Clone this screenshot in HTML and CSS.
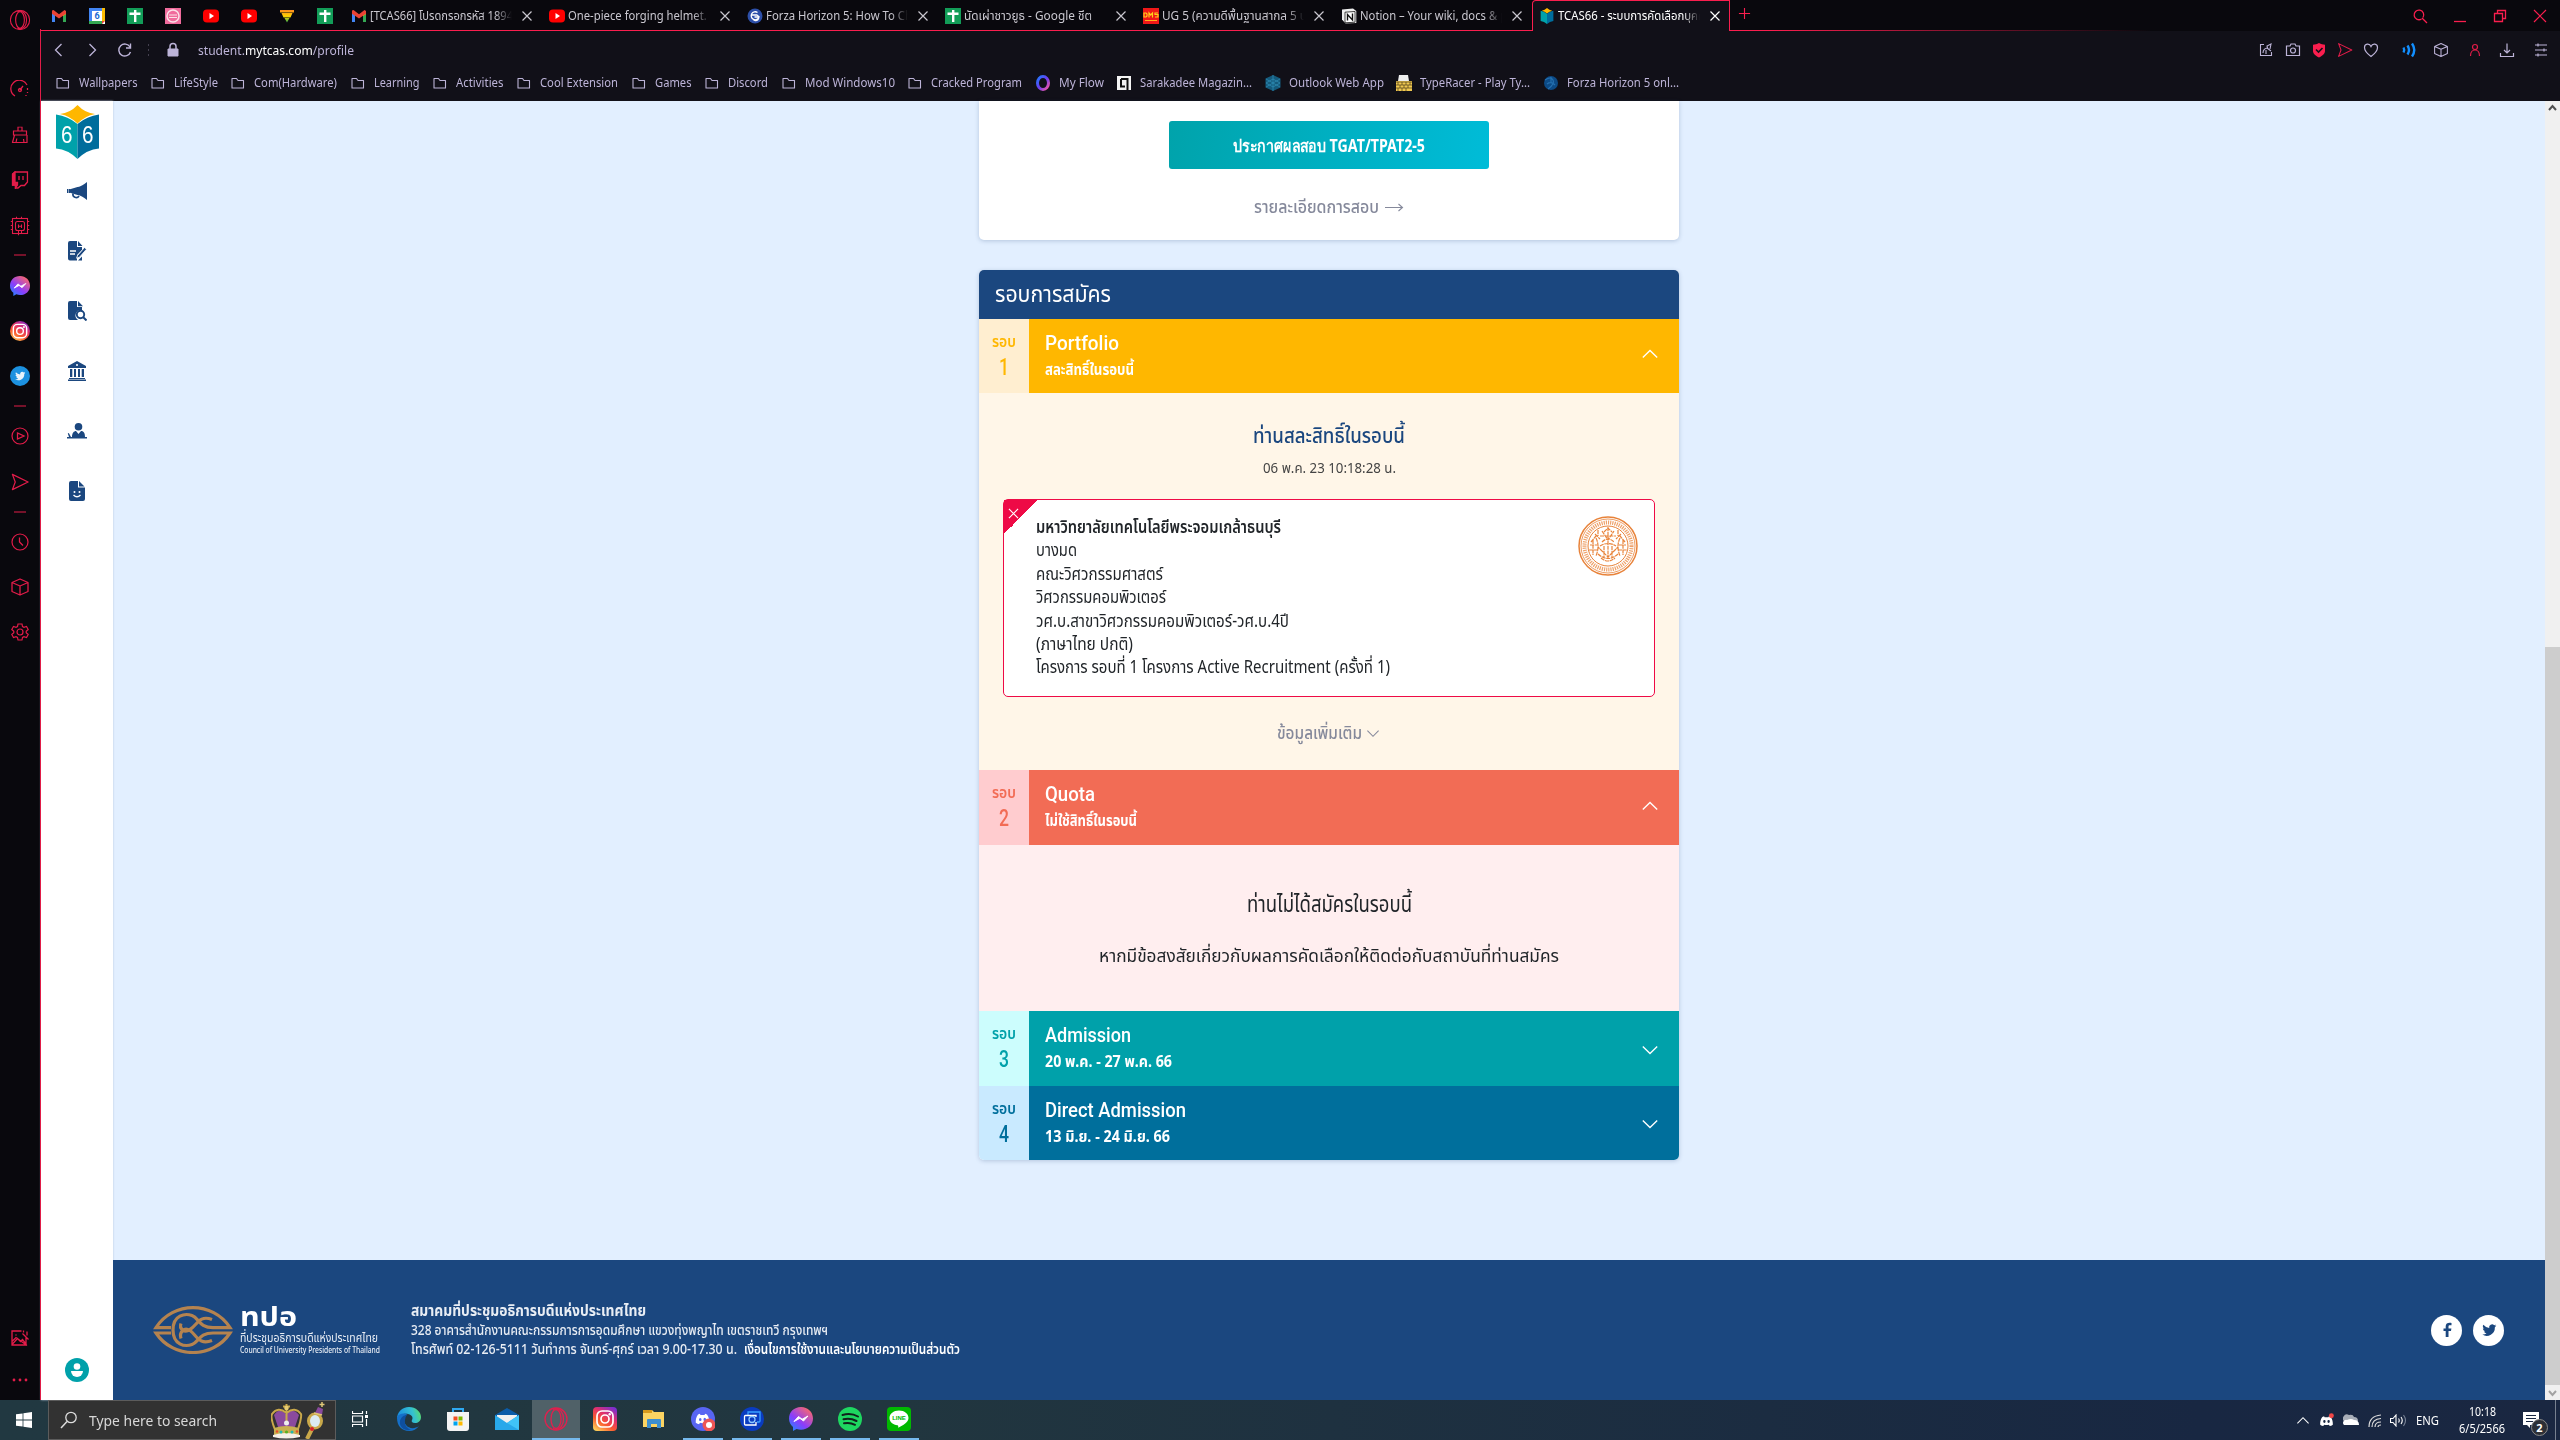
FILE: index.html
```html
<!DOCTYPE html>
<html lang="th">
<head>
<meta charset="utf-8">
<title>TCAS66</title>
<link rel="stylesheet" href="styles.css">
</head>
<body>
<svg class="defs" width="0" height="0" aria-hidden="true">
  <defs>
    <linearGradient id="gFlow" x1="0" y1="0" x2="1" y2="1"><stop offset="0" stop-color="#1f7bff"/><stop offset=".5" stop-color="#6a3cf0"/><stop offset="1" stop-color="#ff5aa0"/></linearGradient>
    <linearGradient id="gMsg" x1="0" y1="1" x2=".8" y2="0"><stop offset="0" stop-color="#1292ff"/><stop offset=".45" stop-color="#8a3dfc"/><stop offset="1" stop-color="#ff6a68"/></linearGradient>
    <linearGradient id="gIg" x1=".15" y1="1" x2=".8" y2="0"><stop offset="0" stop-color="#ffd35a"/><stop offset=".35" stop-color="#f9592f"/><stop offset=".65" stop-color="#e1306c"/><stop offset="1" stop-color="#7b2fd0"/></linearGradient>
    <linearGradient id="gEdge" x1="0" y1=".2" x2="1" y2="0"><stop offset="0" stop-color="#1a8fe0"/><stop offset=".6" stop-color="#35c1d0"/><stop offset="1" stop-color="#5fe05a"/></linearGradient>
    <linearGradient id="gTri" x1="0" y1="0" x2="0" y2="1"><stop offset="0" stop-color="#ff8a1f"/><stop offset=".5" stop-color="#ffd400"/><stop offset="1" stop-color="#2fa84f"/></linearGradient>
  </defs>
  <symbol id="gmail" viewBox="0 0 16 16"><path d="M1 3v11h3V7z" fill="#4285f4"/><path d="M15 3v11h-3V7z" fill="#34a853"/><path d="M12 5v3l3-2V3.500z" fill="#fbbc04"/><path d="M1 2.500 2.500 2 8 6.200 13.500 2l1.500 1v2.700L8 10.500 1 5.700z" fill="#ea4335"/></symbol>
  <symbol id="sheet" viewBox="0 0 16 16"><path d="M0 0h16v16H0z" fill="#129d58"/><path d="M7 2h2.400v12H7zM2.500 4.500h11V7h-11z" fill="#fff"/></symbol>
  <symbol id="yt" viewBox="0 0 16 16"><rect y="1.500" width="16" height="13" rx="4" fill="#f00"/><path d="m6.500 5 4.500 3-4.500 3z" fill="#fff"/></symbol>
  <symbol id="pinkfav" viewBox="0 0 16 16"><path d="M0 0h16v16H0z" fill="#f06b9c"/><circle cx="8" cy="8" r="6" fill="none" stroke="#fbe2e8" stroke-width="1.500"/><path d="M4 7h8M4 9.500h8" stroke="#fbe2e8"/></symbol>
  <symbol id="tri" viewBox="0 0 16 16"><path d="M1 2h14v2.500H1zM2.500 5h11l-2 4.500h-7zM5.500 10h5L8 14.500z" fill="url(#gTri)"/></symbol>
  <symbol id="gfg" viewBox="0 0 16 16"><circle cx="8" cy="8" r="7.500" fill="#2d4fa8"/><path d="M10.500 4.500A4 4 0 1 0 12 9H7.500M4 7h6a3 3 0 1 1-4 4" fill="none" stroke="#fff" stroke-width="1.300"/></symbol>
  <symbol id="ug" viewBox="0 0 16 16"><path d="M0 0h16v16H0z" fill="#f01818"/><path d="M1 5h2l1 1v2L3 9H1zM6 9.500V5l1.700 2L9.500 5v4.500M15 5h-3v1.500h3V9h-3" fill="none" stroke="#ffd21a" stroke-width="1.200"/><path d="M2 12.500h12" stroke="#ffb01a"/></symbol>
  <symbol id="notion" viewBox="0 0 16 16"><path d="M1 1.500 12 .6l3.300 2.400v12L4.500 15.500 1 11.500z" fill="#eee"/><path d="M4 4.200 14 3.500v10.700l-10 .6z" fill="#fff" stroke="#111" stroke-width=".8"/><path d="M6.500 12.500v-6l5 5.500V5.500" fill="none" stroke="#111" stroke-width="1.400"/></symbol>
  <symbol id="book" viewBox="0 0 43 54"><path d="M0 9.500Q12 11 21.500 19v35Q12 44.500 0 43.500z" fill="#00a1aa"/><path d="M43 9.500Q31 11 21.500 19v35Q31 44.500 43 43.500z" fill="#006d9c"/><path d="M4 9Q14 8 21.500 0 29 8 39 9 29 11 21.500 18.500 14 11 4 9z" fill="#ffb700"/></symbol>
  <symbol id="x" viewBox="0 0 16 16"><path d="m3.500 3.500 9 9M12.500 3.500l-9 9" fill="none" stroke="currentColor" stroke-width="1.200"/></symbol>
  <symbol id="folder" viewBox="0 0 16 16"><path d="M2 3.500h4.500l1.500 2h5.500v7.500H2z" fill="none" stroke="currentColor" stroke-width="1.100" stroke-linejoin="round"/></symbol>
  <symbol id="opera" viewBox="0 0 24 24"><g fill="none" stroke="currentColor" stroke-width="1.300"><circle cx="12" cy="12" r="11"/><ellipse cx="12" cy="12" rx="5" ry="9.500"/><path d="M9 2.500C17 0 19.500 7 19.500 12S17 24 9 21.500"/></g></symbol>
  <symbol id="cube" viewBox="0 0 20 20"><path d="m10 2 8 3.500v9L10 18l-8-3.500v-9zM2 5.500 10 9l8-3.500M10 9v9" fill="none" stroke="currentColor" stroke-width="1.300" stroke-linejoin="round"/></symbol>
  <symbol id="send" viewBox="0 0 20 20"><path d="m2 2 16.500 8L2 18l3-8z" fill="none" stroke="currentColor" stroke-width="1.300" stroke-linejoin="round"/></symbol>
  <symbol id="msg" viewBox="0 0 24 24"><path d="M12 0C5 0 0 5 0 11.600c0 3.600 1.500 6.400 4 8.400V24l3.600-2A13 13 0 0 0 12 22.800c7 0 12-4.800 12-11.200S19 0 12 0z" fill="url(#gMsg)"/><path d="m5 14.500 4.500-5 3.600 2.700L19 9l-4.500 5-3.600-2.700z" fill="#fff" stroke="#fff" stroke-linejoin="round"/></symbol>
  <symbol id="igmark" viewBox="0 0 24 24"><g fill="none" stroke="#fff" stroke-width="1.700"><rect x="4" y="4" width="16" height="16" rx="5"/><circle cx="12" cy="12" r="4"/></g><circle cx="16.700" cy="7.300" r="1.200" fill="#fff"/></symbol>
  <symbol id="bird" viewBox="0 0 24 24"><path d="M23 5.500a8 8 0 0 1-2.400.7 4.200 4.200 0 0 0 1.900-2.400 9 9 0 0 1-2.700 1.100 4.400 4.400 0 0 0-7.500 4A12.300 12.300 0 0 1 3.500 4.300a4.400 4.400 0 0 0 1.300 5.800 4 4 0 0 1-2-.6c0 2.200 1.500 4 3.500 4.400a4.500 4.500 0 0 1-2 .1 4.300 4.300 0 0 0 4 3A8.800 8.800 0 0 1 2 18.800a12.300 12.300 0 0 0 18.800-11z" fill="currentColor"/></symbol>
  <symbol id="up" viewBox="0 0 20 12"><path d="m2 10 8-8 8 8" fill="none" stroke="currentColor" stroke-width="1.500"/></symbol>
  <symbol id="down" viewBox="0 0 20 12"><path d="m2 2 8 8 8-8" fill="none" stroke="currentColor" stroke-width="1.500"/></symbol>
  <symbol id="discord" viewBox="0 0 20 16"><path fill-rule="evenodd" d="M6.500 1 4 2C1.500 5.500.8 9 1 13c1.500 1.300 3 2 4.500 2l1-2q3.500 1 7 0l1 2c1.500 0 3-.7 4.500-2 .2-4-.5-7.500-3-11l-2.500-1-.8 1.500H7.300zM5.300 8.500a1.700 2 0 1 0 3.400 0 1.700 2 0 1 0-3.400 0zM11.300 8.500a1.700 2 0 1 0 3.400 0 1.700 2 0 1 0-3.400 0z" fill="#fff"/></symbol>
</svg>

<div class="browser">
  <aside class="gx">
    <svg style="--y:20" width="21" height="21"><use href="#opera"/></svg>
    <svg style="--y:89" width="20" height="18" viewBox="0 0 20 18"><path d="M5 16A8.500 8.500 0 1 1 17 5M10 10l3-4M17.500 8v2M17.500 12v1M16 15v1M8.500 10a1.500 1.500 0 1 0 3 0 1.500 1.500 0 0 0-3 0" fill="none" stroke="currentColor" stroke-width="1.300"/></svg>
    <svg style="--y:135" width="17" height="17" viewBox="0 0 17 17"><path d="M6.500 4.500v-4h4v4M2 8.500v-4h13v4zM3 8.500 1 16h14.500V8.500M4.500 16l.8-4M12 12.500l.5 3.500" fill="none" stroke="currentColor" stroke-width="1.200"/></svg>
    <svg style="--y:180" width="17" height="18" viewBox="0 0 17 18"><path d="M1 3.500 3.500 1H16v10l-3 3.500H9.500L6.500 17H4v-3H1z" fill="none" stroke="currentColor" stroke-width="1.400"/><path d="M1 3 3.500 1v10.500H6V14L4 17v-3H1zM7.500 5v4M11.500 5v4" fill="currentColor" stroke="currentColor" stroke-width="1.300"/></svg>
    <svg style="--y:226" width="19" height="19" viewBox="0 0 19 19"><g fill="none" stroke="currentColor" stroke-width="1.100"><rect x="2" y="2" width="15" height="15"/><rect x="5" y="5" width="9" height="9" rx="2"/><path d="M0 5h2M0 9h2M0 13h2M17 5h2M17 9h2M17 13h2M6 0v2M11 0v2M8 14v5M11 14v3M8 8v3.500M11 8v3.500M8 9.700h3"/></g></svg>
    <i class="dash" style="--y:255"></i>
    <svg style="--y:286" width="20" height="20"><use href="#msg"/></svg>
    <svg style="--y:331" width="20" height="20" viewBox="0 0 24 24"><circle cx="12" cy="12" r="12" fill="url(#gIg)"/><use href="#igmark"/></svg>
    <svg style="--y:376" width="20" height="20" viewBox="0 0 24 24"><circle cx="12" cy="12" r="12" fill="#1c91e0"/><svg x="5" y="5" width="14" height="14" color="#e8f3fb"><use href="#bird"/></svg></svg>
    <i class="dash" style="--y:406"></i>
    <svg style="--y:436" width="18" height="18" viewBox="0 0 18 18"><path d="M6.500 6v6L13 9z" fill="none" stroke="currentColor" stroke-width="1.300"/><circle cx="9" cy="9" r="8" fill="none" stroke="currentColor" stroke-width="1.200"/></svg>
    <svg style="--y:482" width="19" height="19"><use href="#send"/></svg>
    <i class="dash" style="--y:512"></i>
    <svg style="--y:542" width="18" height="18" viewBox="0 0 18 18"><path d="M8.500 4.500V9l3.500 3.500" fill="none" stroke="currentColor" stroke-width="1.300"/><circle cx="9" cy="9" r="8" fill="none" stroke="currentColor" stroke-width="1.200"/></svg>
    <svg style="--y:587" width="20" height="20"><use href="#cube"/></svg>
    <svg style="--y:632" width="18" height="18" viewBox="0 0 18 18"><path d="M7 1h4l.5 2.500 1.500.8 2.500-.8 1.700 3-2 1.700v1.600l2 1.700-1.700 3-2.500-.8-1.500.8L11 17H7l-.5-2.500-1.500-.8-2.500.8-1.700-3 2-1.700V8.200l-2-1.700 1.700-3 2.500.8 1.500-.8z" fill="none" stroke="currentColor" stroke-width="1.200"/><circle cx="9" cy="9" r="3" fill="none" stroke="currentColor" stroke-width="1.200"/></svg>
    <svg style="--y:1338" width="19" height="17" viewBox="0 0 19 17"><path d="M11 1.500H1.500v14h14V8M1.500 15 7 9l3 3 2-2 4 5M5 5.500h1M12 4l6 6M13 1v2M16.500 2v4M1.500 12l4-4 11 8" fill="none" stroke="currentColor" stroke-width="1.300"/></svg>
    <svg style="--y:1380" width="16" height="4" viewBox="0 0 16 4" fill="currentColor"><circle cx="2" cy="2" r="1.400"/><circle cx="8" cy="2" r="1.400"/><circle cx="14" cy="2" r="1.400"/></svg>
  </aside>

  <div class="window">
    <header class="chrome">
      <div class="tabs">
        <div class="pins">
          <svg><use href="#gmail"/></svg>
          <svg viewBox="0 0 16 16"><path d="M0 0h16v16H0z" fill="#fff"/><path d="M0 0h13v3H3v10H0z" fill="#4285f4"/><path d="M13 0h3v13h-3z" fill="#fbbc04"/><path d="M3 13h10v3H0v-3z" fill="#34a853"/><path d="M13 13h3l-3 3z" fill="#ea4335"/><text x="8" y="11" font-size="9" font-weight="700" text-anchor="middle" fill="#1967d2" font-family="Roboto">6</text></svg>
          <svg><use href="#sheet"/></svg><svg><use href="#pinkfav"/></svg><svg><use href="#yt"/></svg><svg><use href="#yt"/></svg><svg><use href="#tri"/></svg><svg><use href="#sheet"/></svg>
        </div>
        <div class="tab"><svg><use href="#gmail"/></svg><span class="label"><span class="fit" data-w="143">[TCAS66] โปรดกรอกรหัส 1894</span></span><svg class="close"><use href="#x"/></svg></div>
        <div class="tab"><svg><use href="#yt"/></svg><span class="label"><span class="fit" data-w="150">One-piece forging helmet. H</span></span><svg class="close"><use href="#x"/></svg></div>
        <div class="tab"><svg><use href="#gfg"/></svg><span class="label"><span class="fit" data-w="146">Forza Horizon 5: How To Ch</span></span><svg class="close"><use href="#x"/></svg></div>
        <div class="tab"><svg><use href="#sheet"/></svg><span class="label"><span class="fit" data-w="128">นัดเผ่าชาวยูธ - Google ชีต</span></span><svg class="close"><use href="#x"/></svg></div>
        <div class="tab"><svg><use href="#ug"/></svg><span class="label"><span class="fit" data-w="145">UG 5 (ความดีพื้นฐานสากล 5 ป</span></span><svg class="close"><use href="#x"/></svg></div>
        <div class="tab"><svg><use href="#notion"/></svg><span class="label"><span class="fit" data-w="147">Notion – Your wiki, docs &amp; p</span></span><svg class="close"><use href="#x"/></svg></div>
        <div class="tab active"><svg><use href="#book"/></svg><span class="label"><span class="fit" data-w="147">TCAS66 - ระบบการคัดเลือกบุคค</span></span><svg class="close"><use href="#x"/></svg></div>
        <svg class="plus" viewBox="0 0 14 14"><path d="M7 1v12M1 7h12" stroke="currentColor" stroke-width="1.200"/></svg>
        <div class="wincontrols">
          <svg viewBox="0 0 16 16"><path d="M11 9.500a4.800 4.800 0 1 0-1.500 1.500M10 10l5 5" fill="none" stroke="currentColor" stroke-width="1.300"/></svg>
          <svg viewBox="0 0 16 16"><path d="M2 13.500h12" stroke="currentColor" stroke-width="1.300"/></svg>
          <svg viewBox="0 0 16 16"><path d="M2.500 5.500h8v8h-8zM5.500 5.500v-3h8v8h-3" fill="none" stroke="currentColor" stroke-width="1.300"/></svg>
          <svg viewBox="0 0 16 16"><path d="m2 2 12 12M14 2 2 14" stroke="currentColor" stroke-width="1.200"/></svg>
        </div>
      </div>
      <div class="address">
        <svg class="nav" viewBox="0 0 16 16"><path d="m10.500 2-6 6 6 6" fill="none" stroke="currentColor" stroke-width="1.300"/></svg>
        <svg class="nav" viewBox="0 0 16 16"><path d="m5.500 2 6 6-6 6" fill="none" stroke="currentColor" stroke-width="1.300"/></svg>
        <svg class="nav" viewBox="0 0 16 16"><path d="M13.500 10A6 6 0 1 1 13 5M13.500 1.500V6H9" fill="none" stroke="currentColor" stroke-width="1.400"/></svg>
        <i class="dots"></i>
        <svg class="lock" viewBox="0 0 14 16"><path d="M2 7h10v7H2z" fill="#bdb4d8" stroke="#bdb4d8"/><path d="M4 7V4.500a3 3 0 0 1 6 0V7" fill="none" stroke="#bdb4d8" stroke-width="1.500"/></svg>
        <span class="url"><span class="fit" data-w="156">student.<b>mytcas.com</b>/profile</span></span>
        <div class="tools">
          <svg viewBox="0 0 16 16"><path d="M6 2.500H2.500v11h11V10M5 11c0-3 2-5 4.500-5L9 4l4-2-1 5M9 6l4 3M8 8v4" fill="none" stroke="currentColor" stroke-width="1.100"/></svg>
          <svg viewBox="0 0 16 16"><path d="M1.500 4H5l1-2h4l1 2h3.500v9.500h-13z" fill="none" stroke="currentColor" stroke-width="1.200"/><circle cx="8" cy="8.500" r="2.500" fill="none" stroke="currentColor" stroke-width="1.200"/></svg>
          <svg viewBox="0 0 16 16"><path d="M8 1c2 1.300 4 1.700 6 1.700V9c0 3-3 5-6 6.500C5 14 2 12 2 9V2.700C4 2.700 6 2.300 8 1z" fill="#fa1e4e"/><path d="m5 7.500 2.500 2.500L11.500 6" fill="none" stroke="#111018" stroke-width="1.600"/></svg>
          <svg class="red"><use href="#send"/></svg>
          <svg viewBox="0 0 16 16"><path d="M8 14.500C4 11.500 1.500 9 1.500 5.500c0-4 5-4.500 6.500-1 1.500-3.500 6.500-3 6.500 1C14.500 9 12 11.500 8 14.500z" fill="none" stroke="currentColor" stroke-width="1.200"/></svg>
          <svg viewBox="0 0 16 16"><path d="M1.500 5.500q1.500 2.500 0 5M5.500 3.500q3 4.500 0 9M10 1.500q4.500 6.500 0 13" fill="none" stroke="#128fff" stroke-width="2.400"/></svg>
          <svg><use href="#cube"/></svg>
          <svg class="red" viewBox="0 0 16 16"><circle cx="8" cy="5" r="2.500" fill="none" stroke="currentColor" stroke-width="1.200"/><path d="M3.500 14c0-8 9-8 9 0" fill="none" stroke="currentColor" stroke-width="1.200"/></svg>
          <svg viewBox="0 0 16 16"><path d="M8 1.500V11M5 8l3 3 3-3M1.500 11v3.500h13V11" fill="none" stroke="currentColor" stroke-width="1.200"/></svg>
          <svg viewBox="0 0 16 16"><path d="M2 3h12M2 8h12M2 13h12M5 1.500v3M11 6.500v3M5 11.500v3" stroke="currentColor" stroke-width="1.200"/></svg>
        </div>
      </div>
      <nav class="bookmarks">
        <a><svg><use href="#folder"/></svg><span class="fit" data-w="58.500">Wallpapers</span></a>
        <a><svg><use href="#folder"/></svg><span class="fit" data-w="44">LifeStyle</span></a>
        <a><svg><use href="#folder"/></svg><span class="fit" data-w="83">Com(Hardware)</span></a>
        <a><svg><use href="#folder"/></svg><span class="fit" data-w="45.500">Learning</span></a>
        <a><svg><use href="#folder"/></svg><span class="fit" data-w="47.500">Activities</span></a>
        <a><svg><use href="#folder"/></svg><span class="fit" data-w="78">Cool Extension</span></a>
        <a><svg><use href="#folder"/></svg><span class="fit" data-w="36.500">Games</span></a>
        <a><svg><use href="#folder"/></svg><span class="fit" data-w="40">Discord</span></a>
        <a><svg><use href="#folder"/></svg><span class="fit" data-w="90">Mod Windows10</span></a>
        <a><svg><use href="#folder"/></svg><span class="fit" data-w="91">Cracked Program</span></a>
        <a><svg viewBox="0 0 16 16"><ellipse cx="8" cy="8" rx="5.500" ry="6.500" fill="none" stroke="url(#gFlow)" stroke-width="3"/></svg><span class="fit" data-w="45">My Flow</span></a>
        <a><svg viewBox="0 0 16 16"><path d="M1 1h14v14H1z" fill="#f4f4f4"/><path d="M5 4h6.500v11M5 4v7.500h4" fill="none" stroke="#111" stroke-width="2"/></svg><span class="fit" data-w="112">Sarakadee Magazin...</span></a>
        <a><svg viewBox="0 0 16 16"><path d="m8 0 7.500 3.500v9L8 16 .5 12.500v-9z" fill="#155a7c"/><path d="m1 4 14 8M15 4 1 12M8 0v16M1 8l7-4 7 4-7 4z" fill="none" stroke="#2f8fb8" stroke-width=".7"/></svg><span class="fit" data-w="95">Outlook Web App</span></a>
        <a><svg viewBox="0 0 16 16"><path d="M3 0h9l1 6H2z" fill="#eee"/><path d="M0 6h16v10H0z" fill="#f0c850"/><path d="M0 7h16M0 10h16M0 13h16M2 7v3M6 7v3M10 7v3M14 7v3M4 10v3M8 10v3M12 10v3M2 13v3M6 13v3M10 13v3" stroke="#5a4a20" stroke-width=".8"/></svg><span class="fit" data-w="110">TypeRacer - Play Ty...</span></a>
        <a><svg viewBox="0 0 16 16"><circle cx="8" cy="8" r="7" fill="#0c4a86"/><path d="M2 5q6-4 8 0T5 14M4 9q4-3 8 1M8 2v6" fill="none" stroke="#2470b0" stroke-width="1.200"/></svg><span class="fit" data-w="112">Forza Horizon 5 onl...</span></a>
      </nav>
    </header>

    <div class="viewport">
      <nav class="menu">
        <div class="logo"><svg viewBox="0 0 43 54"><use href="#book"/></svg><span>6</span><span>6</span></div>
        <svg viewBox="0 0 20 18"><path d="M20 0v18c-3-2.500-6-4.500-10-5.200V5.200C14 4.500 17 2.500 20 0zM10.500 5v8L3 10.700V7.300zM0 7h1v4H0zM1.500 7H3v4H1.500z"/><path d="M6 11.500a3.300 3.300 0 0 0 6 2.500" fill="none" stroke="currentColor" stroke-width="1.700"/></svg>
        <svg viewBox="0 0 20 20"><path d="M1 2Q1 0 3 0h7v6h5v3l-5 5v5.500H3q-2 0-2-2zM11 0l4.500 5H11z"/><path d="M3 10h6M3 13h5" stroke="#fff" stroke-width="1.300"/><path d="m10.500 14.500 7-8 2 1.700-7 8-3 1z" stroke="#fff" stroke-width=".8"/><path d="M10 19.500h5v-4l-4 4z"/></svg>
        <svg viewBox="0 0 20 20"><path d="M1 2Q1 0 3 0h7v6h5v3a5.500 5.500 0 0 0-4 10H3q-2 0-2-2zM11 0l5 5.200H11z"/><circle cx="13.500" cy="13.500" r="3.700" fill="#fff" stroke="currentColor" stroke-width="1.900"/><path d="m16 16 3.500 3.500" stroke="currentColor" stroke-width="2"/></svg>
        <svg viewBox="0 0 20 20"><path d="M10 0 19 5v2H1V5zM2 17h16v1H2zM1 18.500h18V20H1zM3 8h2.300v8H3zM7 8h2v8H7zM11 8h2v8h-2zM14.700 8H17v8h-2.300z"/><circle cx="10" cy="4" r="1" fill="#fff"/></svg>
        <svg viewBox="0 0 20 16"><circle cx="11.500" cy="3.800" r="3.800"/><path d="M5 14c0-4 2-6 4-6l2.500 3L14 8c3 0 4 2.500 4 6h2v1.500H0V14h2L.8 10.500l1-.5L4 14z"/></svg>
        <svg viewBox="0 0 20 20"><path d="M2 2q0-2 2-2h7v6.500h7V18q0 2-2 2H4q-2 0-2-2zM12 0l5.500 5.500H12z"/><circle cx="7.500" cy="11" r="1" fill="#fff"/><circle cx="12.500" cy="11" r="1" fill="#fff"/><path d="M6.500 14q3.500 3.500 7 0" fill="none" stroke="#fff" stroke-width="1.400"/></svg>
        <svg class="me" viewBox="0 0 24 24"><circle cx="12" cy="12" r="12" fill="#00a1aa"/><circle cx="12" cy="8.500" r="3.300" fill="#fff"/><path d="M6 13h12a6 6 0 0 1-12 0z" fill="#fff"/></svg>
      </nav>

      <div class="page">
        <main>
          <section class="card exam">
            <button><span class="fit" data-w="192">ประกาศผลสอบ TGAT/TPAT2-5</span></button>
            <a class="link"><span class="fit" data-w="125">รายละเอียดการสอบ</span><svg width="19" height="9" viewBox="0 0 19 9"><path d="M0 4.500h17.500M13.500 1l4 3.500-4 3.500" fill="none" stroke="currentColor" stroke-width="1.100"/></svg></a>
          </section>

          <section class="card rounds">
            <h2><span class="fit" data-w="116">รอบการสมัคร</span></h2>

            <div class="round r1">
              <div class="no"><span class="fit" data-w="24">รอบ</span><b><span class="fit" data-w="10">1</span></b></div>
              <div class="bar"><div><h3><span class="fit" data-w="74">Portfolio</span></h3><p><span class="fit" data-w="89">สละสิทธิ์ในรอบนี้</span></p></div><svg><use href="#up"/></svg></div>
            </div>
            <div class="panel p1">
              <h4><span class="fit" data-w="152">ท่านสละสิทธิ์ในรอบนี้</span></h4>
              <time><span class="fit" data-w="133">06 พ.ค. 23 10:18:28 น.</span></time>
              <article>
                <div class="corner"><svg viewBox="0 0 12 12"><path d="m1 1 10 10M11 1 1 11" stroke="#fff" stroke-width="1.200"/></svg></div>
                <ul>
                  <li class="strong"><span class="fit" data-w="245">มหาวิทยาลัยเทคโนโลยีพระจอมเกล้าธนบุรี</span></li>
                  <li><span class="fit" data-w="41">บางมด</span></li>
                  <li><span class="fit" data-w="127">คณะวิศวกรรมศาสตร์</span></li>
                  <li><span class="fit" data-w="130">วิศวกรรมคอมพิวเตอร์</span></li>
                  <li><span class="fit" data-w="253">วศ.บ.สาขาวิศวกรรมคอมพิวเตอร์-วศ.บ.4ปี</span></li>
                  <li><span class="fit" data-w="97">(ภาษาไทย ปกติ)</span></li>
                  <li><span class="fit" data-w="354">โครงการ รอบที่ 1 โครงการ Active Recruitment (ครั้งที่ 1)</span></li>
                </ul>
                <svg class="seal" viewBox="0 0 60 60" fill="none" stroke="#e8833a"><circle cx="30" cy="30" r="29" stroke-width="1.500"/><circle cx="30" cy="30" r="27" stroke-width=".8"/><circle cx="30" cy="30" r="23.500" stroke-width="4" stroke-dasharray="1.200 1" opacity=".75"/><circle cx="30" cy="30" r="20" stroke-width="1"/><path d="M30 11v32M26 16l4-4 4 4M22 20h16M24 15l6 9 6-9M20 14v6M40 14v6M24 26q6-6 12 0M22 30q8-5 16 0M15 24v15M45 24v15M12 29h7M41 29h7M11 34h9M40 34h9M22 33l8 8 8-8M20 38q10 9 20 0M23 42q7 6 14 0M18 22q4 8 0 18M42 22q-4 8 0 18M26 30v12M34 30v12M17 18l5 5M43 18l-5 5M13 26l5-6M47 26l-5-6M25 36l-5-5M35 36l5-5" stroke-width="1.200" stroke-dasharray="4 .7"/></svg>
              </article>
              <a class="link"><span class="fit" data-w="85">ข้อมูลเพิ่มเติม</span><svg width="14" height="9"><use href="#down"/></svg></a>
            </div>

            <div class="round r2">
              <div class="no"><span class="fit" data-w="24">รอบ</span><b><span class="fit" data-w="10">2</span></b></div>
              <div class="bar"><div><h3><span class="fit" data-w="50">Quota</span></h3><p><span class="fit" data-w="92">ไม่ใช้สิทธิ์ในรอบนี้</span></p></div><svg><use href="#up"/></svg></div>
            </div>
            <div class="panel p2">
              <h4><span class="fit" data-w="165">ท่านไม่ได้สมัครในรอบนี้</span></h4>
              <p><span class="fit" data-w="460">หากมีข้อสงสัยเกี่ยวกับผลการคัดเลือกให้ติดต่อกับสถาบันที่ท่านสมัคร</span></p>
            </div>

            <div class="round r3">
              <div class="no"><span class="fit" data-w="24">รอบ</span><b><span class="fit" data-w="10">3</span></b></div>
              <div class="bar"><div><h3><span class="fit" data-w="86">Admission</span></h3><p><span class="fit" data-w="127">20 พ.ค. - 27 พ.ค. 66</span></p></div><svg><use href="#down"/></svg></div>
            </div>
            <div class="round r4">
              <div class="no"><span class="fit" data-w="24">รอบ</span><b><span class="fit" data-w="10">4</span></b></div>
              <div class="bar"><div><h3><span class="fit" data-w="141">Direct Admission</span></h3><p><span class="fit" data-w="125">13 มิ.ย. - 24 มิ.ย. 66</span></p></div><svg><use href="#down"/></svg></div>
            </div>
          </section>
        </main>

        <footer>
          <svg class="knot" viewBox="0 0 80 48" fill="none" stroke="#b5834f" stroke-width="3.200"><path d="M18 21.600H3C20-5 60-5 77 21.600H60C46 21.600 46 12 39 9.500 32 7 20 9 20 24s12 17 19 14.500C46 36 46 27 60 27h17C60 53 20 53 3 27h15"/><path d="M59 13.500c-13-5-15 6-22 10-6 4-11-1-9-6M59 34.500c-13 5-15-5-22-10-6-4-11 2-9 8"/></svg>
          <div class="org"><strong><span class="fit" data-w="57">ทปอ</span></strong><span><span class="fit" data-w="138">ที่ประชุมอธิการบดีแห่งประเทศไทย</span></span><small><span class="fit" data-w="140">Council of University Presidents of Thailand</span></small></div>
          <address>
            <strong><span class="fit" data-w="235">สมาคมที่ประชุมอธิการบดีแห่งประเทศไทย</span></strong>
            <span><span class="fit" data-w="417">328 อาคารสำนักงานคณะกรรมการการอุดมศึกษา แขวงทุ่งพญาไท เขตราชเทวี กรุงเทพฯ</span></span>
            <span><span class="fit" data-w="326">โทรศัพท์ 02-126-5111 วันทำการ จันทร์-ศุกร์ เวลา 9.00-17.30 น.</span><b><span class="fit" data-w="216">เงื่อนไขการใช้งานและนโยบายความเป็นส่วนตัว</span></b></span>
          </address>
          <div class="social">
            <a><svg viewBox="0 0 16 16"><path d="M9.500 15V9H12l.4-2.600H9.500V4.700c0-.9.400-1.400 1.500-1.400h1.500V1C9 .4 6.700 1.500 6.700 4.200v2.200H4.500V9h2.200v6z" fill="currentColor"/></svg></a>
            <a><svg><use href="#bird"/></svg></a>
          </div>
        </footer>
      </div>

      <div class="scroll"><svg viewBox="0 0 15 15"><path d="m4 9 3.500-4L11 9" fill="none" stroke="#505050" stroke-width="2"/></svg><i></i><svg viewBox="0 0 15 15"><path d="m4 6 3.500 4L11 6" fill="none" stroke="#a3a3a3" stroke-width="2"/></svg></div>
    </div>
  </div>
</div>

<div class="taskbar">
  <div class="start"><svg width="16" height="16" viewBox="0 0 16 16"><path d="M0 2.300 6.600 1.400v6.200H0zM7.400 1.300 16 0v7.600H7.400zM0 8.400h6.600v6.200L0 13.700zM7.400 8.400H16V16l-8.600-1.300z" fill="#fff"/></svg></div>
  <div class="search">
    <svg width="18" height="18" viewBox="0 0 18 18"><circle cx="11" cy="6.500" r="5.200" fill="none" stroke="#ddd" stroke-width="1.300"/><path d="M7 10.500 1 17" stroke="#ddd" stroke-width="1.500"/></svg>
    <span class="fit" data-w="128">Type here to search</span>
    <svg class="regalia" width="56" height="38" viewBox="0 0 56 38"><path d="M3 14q5-8 12-1 7-7 13 1l-4 12H7z" fill="#8a4a9e"/><path d="M5 31Q-1 17 1 13q6-8 14.500-1Q24 5 30 13q1 4-4 18M15.500 3v21M12 5.500h7" fill="none" stroke="#c9a84a" stroke-width="2"/><circle cx="15.500" cy="7" r="2.300" fill="#e8cc70"/><circle cx="15.500" cy="22" r="2.500" fill="#eee"/><path d="M3 27q12-4 25 0v7q-12 4-25 0z" fill="#c8b050"/><path d="M2 34q13-4 27 0v2q-14 3-27 0z" fill="#f5f0e8"/><g fill="#20b8b0"><circle cx="10" cy="31" r="1.500"/><circle cx="21" cy="31" r="1.500"/></g><g fill="#e8502a"><circle cx="6" cy="30.500" r="1.300"/><circle cx="26" cy="30.500" r="1.300"/></g><circle cx="15.500" cy="31" r="1.600" fill="#58b020"/><path d="m36 38 6-12" stroke="#c9a84a" stroke-width="4"/><ellipse cx="44" cy="20" rx="8" ry="8.500" fill="#c9a84a"/><ellipse cx="44" cy="20" rx="5" ry="6" fill="#dcecf2"/><path d="m44 12 3-6 5 2-1 6z" fill="#8a4a9e"/><path d="m43 12 8 2M51 1v5M48.500 3.500h5" stroke="#e0c878" stroke-width="1.500"/><circle cx="41" cy="28" r="2" fill="#d8202a"/></svg>
  </div>
  <div class="app"><svg width="16" height="16" viewBox="0 0 16 16"><path d="M.5 0v2.500h10V0M.5 5h10v6H.5zM.5 16v-2.500h10V16M14.500 0v3M14.500 8v7" fill="none" stroke="#fff" stroke-width="1.200"/><path d="M13 4h3v3h-3z" fill="#fff"/></svg></div>
  <div class="app"><svg viewBox="0 0 24 24"><path d="M0 12C0 5 5 0 12 0s12 5 12 10c0 4-3 6-6 6s-4-1.500-3-3 1-5-4-6C6 6 1 9 0 12z" fill="url(#gEdge)"/><path d="M0 11c1-5 8-5 11-4-4 1-5 7-2 11s9 4 13 1c-2 3-6 5-10 5C5 24 0 19 0 11z" fill="#1570c8"/><path d="M8 13c-1 5 2 8 6 10-7 1-12-3-11-9 1-4 4-6 7-6q-2 2-2 5z" fill="#0e4f9e"/></svg></div>
  <div class="app"><svg viewBox="0 0 24 24"><path d="M7 6V2h10v4" fill="none" stroke="#2fa8f0" stroke-width="2"/><path d="M1 5h22v16q0 3-3 3H4q-3 0-3-3z" fill="#f4f4f4"/><path d="M7.500 9.500h4v4h-4z" fill="#f25022"/><path d="M12.500 9.500h4v4h-4z" fill="#7fba00"/><path d="M7.500 14.500h4v4h-4z" fill="#00a4ef"/><path d="M12.500 14.500h4v4h-4z" fill="#ffb900"/></svg></div>
  <div class="app"><svg viewBox="0 0 24 24"><path d="M0 8 12 1l12 7v3H0z" fill="#0b5ca8"/><path d="M2 8h20v8H2z" fill="#f0f0f0"/><path d="M0 8v15h24V8L12 16z" fill="#28a8ea"/><path d="m12 16 12-8v15z" fill="#40c4f8"/></svg></div>
  <div class="app current"><svg><use href="#opera"/></svg></div>
  <div class="app"><svg viewBox="0 0 24 24"><rect width="24" height="24" rx="4" fill="url(#gIg)"/><use href="#igmark"/></svg></div>
  <div class="app"><svg viewBox="0 0 24 24"><path d="M1 3h9l2 2h10v15H1z" fill="#fcd462"/><path d="M1 3h9v3H1z" fill="#d89a1c"/><path d="M5 21v-8q0-1 1-1h12q1 0 1 1v8h-4v-4H9v4z" fill="#3d8fd0"/></svg></div>
  <div class="app open"><svg viewBox="0 0 24 24"><circle cx="12" cy="12" r="12" fill="#5865f2"/><svg x="4" y="6" width="15" height="12"><use href="#discord"/></svg><circle cx="18" cy="18" r="6.500" fill="#ed5555"/><circle cx="18" cy="18" r="3" fill="#fff"/></svg></div>
  <div class="app open"><svg viewBox="0 0 24 24"><circle cx="12" cy="12" r="12" fill="#0a3cc0"/><path d="M8 8V5h12v9q0 1-1 1h-2" fill="none" stroke="#3aa0ff" stroke-width="1.300"/><path d="M16 10V8.500H5.500q-1 0-1 1V17q0 1 1 1H16v-3" fill="none" stroke="#fff" stroke-width="1.300"/><circle cx="12" cy="12.500" r="3" fill="none" stroke="#8cc8ff" stroke-width="1.300"/></svg></div>
  <div class="app open"><svg><use href="#msg"/></svg></div>
  <div class="app open"><svg viewBox="0 0 24 24"><circle cx="12" cy="12" r="12" fill="#1ed760"/><path d="M4.500 8Q13 5.500 20 9.500M5.500 12.300Q12 10.500 18.500 14M6 16.300Q12 15 17 17.800" fill="none" stroke="#10231c" stroke-width="2" stroke-linecap="round"/></svg></div>
  <div class="app open"><svg viewBox="0 0 24 24"><rect width="24" height="24" rx="4" fill="#00b900"/><path d="M12 3.500c-5.500 0-9.500 3.300-9.500 7.500 0 4 3.500 6.700 8 7.200.8.200.9.700.7 2.500 5-2.500 10.300-5.500 10.300-9.700 0-4.200-4-7.500-9.500-7.500z" fill="#fff"/><text x="12" y="13" font-family="Liberation Sans" font-weight="700" font-size="6" text-anchor="middle" fill="#00b900">LINE</text></svg></div>
  <div class="tray">
    <svg width="14" height="9" color="#fff"><use href="#up"/></svg>
    <svg width="15" height="14" viewBox="0 0 20 18"><svg y="3" width="20" height="15"><use href="#discord"/></svg><circle cx="16.500" cy="3.300" r="3.300" fill="#f04747"/></svg>
    <svg width="16" height="12" viewBox="0 0 16 12"><path d="M2 8a4 4 0 0 1 4-7q4-1 5 2 4 0 4 4z" fill="#a8aeb8"/><path d="M1 11a3 3 0 0 1 3-5q4-2 7 0 5 0 5 5z" fill="#fff"/></svg>
    <svg width="13" height="13" viewBox="0 0 13 13"><path d="M1 13Q1 2 13 1M4 13Q4 5 13 4.500M7 13q0-5 6-5M10 13q0-2 3-2" fill="none" stroke="#ddd" stroke-width="1.200"/></svg>
    <svg width="17" height="13" viewBox="0 0 17 13"><path d="M.5 4.500H3l3-3.500v11L3 8.500H.5zM8.500 4.500q1.500 2 0 4M11 3q2.500 3.500 0 7" fill="none" stroke="#fff" stroke-width="1.100"/><path d="M13.500 1q4 5.500 0 11" fill="none" stroke="#7a8598" stroke-width="1.100"/></svg>
    <span class="fit" data-w="23">ENG</span>
    <div class="clock"><span class="fit" data-w="27">10:18</span><span class="fit" data-w="46">6/5/2566</span></div>
    <div class="note"><svg width="16" height="16" viewBox="0 0 16 16"><path d="M0 0h16v13H7v3l-3-3H0z" fill="#fff"/><path d="M3 3.500h10M3 6.500h10M3 9.500h7" stroke="#182742"/></svg><b>2</b></div>
  </div>
</div>
<script src="fit.js"></script>
</body>
</html>
```
FILE: styles.css
```css
* { box-sizing: border-box; }
body { margin: 0; width: 2560px; height: 1440px; overflow: hidden; background: #09080d; font-family: "Noto Sans", "Noto Sans Thai", "Liberation Sans", sans-serif; }
h2, h3, h4, p, ul { margin: 0; padding: 0; font-weight: 400; list-style: none; }
svg { flex: none; display: block; }
.defs { position: absolute; }
.fit { display: inline-block; white-space: nowrap; transform-origin: 0 50%; }

.browser { display: flex; height: 1400px; }
.gx { position: relative; width: 41px; border-right: 1px solid #fa1e4e; border-image: linear-gradient(#09080d 30px, #e01c48 30px) 1; color: #e31c49; }
.gx > * { position: absolute; left: 20px; top: calc(var(--y) * 1px); transform: translate(-50%, -50%); }
.gx .dash { width: 12px; height: 1px; background: #e31c49; }
.window { flex: 1; display: flex; flex-direction: column; }

.chrome { height: 101px; background: #111018; color: #bdb4d8; font-size: 12px; }
.tabs { position: relative; display: flex; align-items: center; height: 31px; background: #09080d; color: #c9c7cf; }
.tabs::after { content: ""; position: absolute; left: 0; right: 0; bottom: 0; height: 1px; background: linear-gradient(90deg, #fa1e4e 1730px, transparent 2110px); }
.pins { display: flex; gap: 22px; width: 303px; padding-left: 10px; }
.pins svg, .tab svg { width: 16px; height: 16px; }
.tab { display: flex; align-items: center; width: 198px; height: 31px; padding-left: 7px; }
.tab .label { width: 147px; margin-left: 3px; overflow: hidden; -webkit-mask: linear-gradient(90deg, #000 125px, transparent 142px); }
.tab .close { margin-left: 2px; }
.tab.active { position: relative; z-index: 1; background: #111018; border: 1px solid #fa1e4e; border-bottom: 0; border-radius: 4px 0 0 0; padding-left: 6px; color: #fff; }
.plus { width: 13px; height: 13px; margin-left: 8px; margin-top: -4px; color: #fa1e4e; }
.wincontrols { display: flex; gap: 24px; margin-left: auto; margin-right: 12px; color: #fa1e4e; }
.wincontrols svg { width: 16px; height: 16px; }
.address { display: flex; align-items: center; height: 38px; padding-left: 10px; }
.nav { width: 16px; height: 16px; margin-right: 17px; }
.dots { width: 1px; height: 12px; margin-left: -2px; background: repeating-linear-gradient(#44404f 0 2px, transparent 2px 5px); }
.lock { width: 14px; height: 16px; margin: 0 18px 0 17px; }
.url b { color: #fff; font-weight: 400; }
.tools { display: grid; grid-template-columns: 27px 26px 26px 26px 39px 31px 34px 32px 34px 16px; margin-left: auto; margin-right: 11px; }
.tools svg { width: 16px; height: 16px; }
.red { color: #e31c49; }
.bookmarks { display: grid; grid-template-columns: 95px 80px 120px 82px 84px 115px 73px 77px 126px 128px 81px 149px 131px 147px 140px; align-items: center; height: 27px; padding-left: 14px; }
.bookmarks a { display: flex; align-items: center; gap: 8px; }
.bookmarks svg { width: 16px; height: 16px; }

.viewport { flex: 1; display: flex; background: #e2efff; }
.menu { display: flex; flex-direction: column; align-items: center; width: 72px; padding-top: 4px; background: #fff; color: #1b477f; fill: currentColor; box-shadow: 0 0 2px #b8c8dc; }
.menu > svg { width: 20px; height: 20px; margin-bottom: 40px; }
.logo { position: relative; display: flex; width: 43px; height: 54px; margin-bottom: 22px; }
.logo svg { position: absolute; inset: 0; width: 43px; height: 54px; }
.logo span { position: relative; width: 50%; padding-top: 14px; color: #fff; font: 24px/32px "Liberation Sans Narrow", "Liberation Sans", sans-serif; text-align: center; transform: scaleX(.86); }
.menu .me { width: 24px; height: 24px; margin: auto 0 18px; }
.page { flex: 1; display: flex; flex-direction: column; justify-content: space-between; }
main { display: flex; flex-direction: column; gap: 30px; width: 700px; margin: 0 auto; }
.card { background: #fff; border-radius: 0 0 5px 5px; box-shadow: 0 1px 4px rgba(40, 70, 120, .25); }
.exam { display: flex; flex-direction: column; align-items: center; height: 139px; padding-top: 20px; }
.exam button { display: flex; align-items: center; justify-content: center; width: 320px; height: 48px; padding: 0; border: 0; border-radius: 3px; background: linear-gradient(100deg, #00a3ab, #00bcd8); color: #fff; font: 700 17px "Noto Sans", sans-serif; }
.link { display: flex; align-items: center; justify-content: center; color: #85899b; font-size: 18px; font-weight: 500; }
.exam .link { gap: 6px; height: 24px; margin-top: 26px; }
.rounds { overflow: hidden; border-radius: 5px; }
h2 { display: flex; align-items: center; height: 49px; padding-left: 16px; background: #1b477f; color: #fff; font-size: 23px; }
.round { display: flex; height: 75px; }
.r1 { height: 74px; --c: #ffb700; --l: #ffeed0; }
.r2 { --c: #f26c55; --l: #ffcccf; }
.r3 { --c: #00a1aa; --l: #ccfdfd; }
.r4 { height: 74px; --c: #006f9c; --l: #c9eaff; }
.no { display: flex; flex-direction: column; align-items: center; width: 50px; padding-top: 12px; background: var(--l); color: var(--c); font-size: 16px; font-weight: 600; line-height: 20px; }
.no b { margin-top: 3px; font: 500 23px/27px Roboto, sans-serif; }
.bar { display: flex; flex: 1; align-items: center; justify-content: space-between; padding: 0 20px 0 16px; background: var(--c); color: #fff; }
.bar h3 { font: 500 21px/26px Roboto, sans-serif; }
.bar p { font-size: 16px; font-weight: 700; line-height: 27px; }
.bar svg { width: 18px; height: 12px; margin-top: -4px; }
.r3 .bar svg, .r4 .bar svg { margin-top: 2px; }
.panel { display: flex; flex-direction: column; align-items: center; color: #212529; }
.p1 { height: 377px; padding-top: 25px; background: #fff6e8; }
.p1 h4 { color: #1b477f; font-size: 22px; font-weight: 500; line-height: 32px; }
time { margin-top: 8px; font-size: 14px; line-height: 20px; color: #444; }
article { position: relative; display: flex; justify-content: space-between; width: 652px; height: 198px; margin-top: 21px; padding: 15px 16px 0 32px; background: #fff; border: 1px solid #ee0a46; border-radius: 5px; }
.corner { position: absolute; left: 0; top: 0; width: 34px; height: 34px; background: linear-gradient(135deg, #ee0a46 50%, transparent 50%); }
.corner svg { width: 11px; height: 11px; margin: 8px 0 0 4px; }
article li { height: 23.400px; font-size: 17.500px; line-height: 23px; }
.strong { font-weight: 600; }
.seal { width: 60px; height: 60px; margin-top: 1px; }
.p1 .link { gap: 4px; margin-top: 24px; margin-right: 2px; height: 24px; }
.p2 { height: 166px; padding-top: 40px; background: #ffeeef; }
.p2 h4 { font-size: 23px; line-height: 36px; }
.p2 p { margin-top: 20px; font-size: 18px; line-height: 28px; }

footer { display: flex; align-items: center; height: 140px; padding: 0 41px 0 40px; background: #1b477f; color: #e8edf4; }
.knot { width: 80px; height: 48px; }
.org { display: flex; flex-direction: column; width: 171px; margin-left: 7px; }
.org strong { height: 25px; font-size: 26px; line-height: 22px; color: #fff; }
.org > span { font-size: 13px; line-height: 15px; }
.org small { font-size: 8px; font-weight: 500; line-height: 10px; }
address { display: flex; flex-direction: column; font-style: normal; font-size: 14px; font-weight: 500; line-height: 19px; margin-top: -1px; }
address strong { font-size: 15px; }
address b { margin-left: 7px; color: #fff; font-weight: 600; }
.social { display: flex; gap: 11px; margin-left: auto; }
.social a { display: grid; place-items: center; width: 31px; height: 31px; border-radius: 50%; background: #fff; color: #1b477f; }
.social svg { width: 16px; height: 16px; }
.scroll { display: flex; flex-direction: column; width: 15px; background: #f0f0f0; }
.scroll svg { width: 15px; height: 15px; }
.scroll i { flex: 1; margin-top: 531px; background: #cdcdcd; }

.taskbar { display: flex; height: 40px; background: linear-gradient(90deg, #213841, #21363f 900px, #182742 2200px, #1a2741); color: #fff; }
.start { display: grid; place-items: center; width: 48px; }
.search { display: flex; align-items: center; width: 288px; padding-left: 11px; border: 1px solid #5c5c5c; background: #323232; color: #d8d8d8; font-size: 15px; }
.search .fit { margin-left: 11px; }
.regalia { margin-left: auto; margin-right: 8px; }
.app { position: relative; display: grid; place-items: center; width: 49px; padding-right: 1px; border-bottom: 2px solid transparent; }
.app svg { width: 24px; height: 24px; }
.app:nth-child(3) svg { width: 16px; height: 16px; }
.app.current { width: 48px; margin-right: 1px; padding: 0; background: #506168; border-bottom-color: #76b9ed; color: #e0204e; }
.app.open::after { content: ""; position: absolute; left: 4px; right: 5px; bottom: -2px; height: 2px; background: #76b9ed; }
.app svg svg { width: 15px; height: 12px; }
.tray { display: flex; align-items: center; gap: 9px; margin-left: auto; padding-right: 4px; font-size: 12.500px; }
.tray svg svg { width: 20px; height: 15px; }
.clock { display: flex; flex-direction: column; align-items: center; width: 66px; margin-left: 1px; line-height: 17px; }
.note { position: relative; width: 37px; height: 40px; margin-left: -6px; padding: 12px 0 0 5px; box-sizing: content-box; width: 32px; height: 28px; border-right: 1px solid #77808f; }
.note b { position: absolute; left: 13px; top: 19px; width: 17px; height: 17px; border: 1px solid #8a8a8a; border-radius: 50%; background: #2c2f36; font: 700 11px/15px "Noto Sans"; text-align: center; }
```
FILE: fit.js
```js
// Condense or widen each label to its designed width, keeping the layout box in step.
document.querySelectorAll('.fit').forEach(function (el) {
  var natural = el.getBoundingClientRect().width;
  var target = parseFloat(el.dataset.w);
  el.style.transform = 'scaleX(' + target / natural + ')';
  el.style.marginRight = (target - natural) + 'px';
});
```
